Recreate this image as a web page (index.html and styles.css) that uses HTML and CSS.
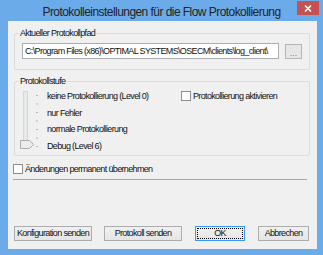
FILE: index.html
```html
<!DOCTYPE html>
<html lang="de">
<head>
    <meta charset="UTF-8">
    <title>Protokolleinstellungen</title>
    <link rel="stylesheet" href="styles.css">
</head>
<body>
<div class="window">
    <div class="titlebar">Protokolleinstellungen für die Flow Protokollierung</div>
    <button class="close" title="Schließen">
        <svg width="8" height="7" viewBox="0 0 8 7"><path d="M1 0.5 L7 6.5 M7 0.5 L1 6.5" stroke="#fff" stroke-width="1.6"/></svg>
    </button>

    <div class="client">
        <!-- Pfad -->
        <fieldset class="group path-group">
            <legend>Aktueller Protokollpfad</legend>
            <div class="path-row">
                <div class="textbox">C:\Program Files (x86)\OPTIMAL SYSTEMS\OSECM\clients\log_client\</div>
                <button class="browse">...</button>
            </div>
        </fieldset>

        <!-- Stufe -->
        <fieldset class="group level-group">
            <legend>Protokollstufe</legend>
            <div class="level-row">
                <svg class="slider" width="21" height="62" viewBox="0 0 21 62">
                    <rect x="4.5" y="3.5" width="4" height="52" fill="#e7eaea" stroke="#d6d6d6"/>
                    <g stroke="#b9b9b9">
                        <line x1="17" y1="7.5" x2="19" y2="7.5"/>
                        <line x1="17" y1="16" x2="19" y2="16"/>
                        <line x1="17" y1="24.5" x2="19" y2="24.5"/>
                        <line x1="17" y1="33" x2="19" y2="33"/>
                        <line x1="17" y1="41.5" x2="19" y2="41.5"/>
                        <line x1="17" y1="50" x2="19" y2="50"/>
                        <line x1="17" y1="58.5" x2="19" y2="58.5"/>
                    </g>
                    <polygon points="1.5,52.5 10.5,52.5 14.5,56.5 10.5,60.5 1.5,60.5" fill="#ececec" stroke="#acacac"/>
                </svg>
                <ul class="levels">
                    <li>keine Protokollierung (Level 0)</li>
                    <li>nur Fehler</li>
                    <li>normale Protokollierung</li>
                    <li>Debug (Level 6)</li>
                </ul>
                <label class="check activate"><span class="box"></span>Protokollierung aktivieren</label>
            </div>
        </fieldset>

        <label class="check permanent"><span class="box"></span>Änderungen permanent übernehmen</label>
        <hr class="separator">

        <div class="actions">
            <button class="btn btn-wide">Konfiguration senden</button>
            <button class="btn btn-wide">Protokoll senden</button>
            <button class="btn btn-ok">OK</button>
            <button class="btn btn-cancel">Abbrechen</button>
        </div>
    </div>
</div>
</body>
</html>
```

FILE: styles.css
```css
body {
    margin: 0;
    padding: 0;
    background: #6cabe9;
}

.window {
    position: relative;
    width: 323px;
    height: 255px;
    box-sizing: border-box;
    padding: 0 6px 6px 8px;
    background: #6cabe9;
    display: flex;
    flex-direction: column;
    font-family: "Liberation Sans", Arial, sans-serif;
    font-size: 9px;
    letter-spacing: -0.65px;
    color: #111;
}

.titlebar {
    height: 21px;
    margin: 0 -6px 0 -8px;
    text-align: center;
    font-size: 12px;
    letter-spacing: -0.55px;
    line-height: 24px;
    color: #1f1f1f;
}

.close {
    position: absolute;
    top: 1px;
    right: 4px;
    width: 22px;
    height: 14px;
    padding: 0;
    border: none;
    background: #c75050;
    display: flex;
    align-items: center;
    justify-content: center;
}

.client {
    flex: 1;
    background: #f0f0f0;
    padding: 6px 7px 8px 6px;
    display: flex;
    flex-direction: column;
}

.group {
    margin: 0;
    min-width: 0;
    border: 1px solid #dcdcdc;
    border-radius: 2px;
}

.group legend {
    padding: 0 1px;
    line-height: 12px;
}

.path-group {
    padding: 4px 7px 10px 4px;
}

.path-row {
    display: flex;
    gap: 6px;
    margin-left: 3px;
}

.textbox {
    width: 257px;
    height: 16px;
    box-sizing: border-box;
    border: 1px solid #abadb3;
    background: #fff;
    padding-left: 2px;
    line-height: 14px;
    white-space: nowrap;
    overflow: hidden;
}

.browse {
    width: 17px;
    height: 15px;
    margin-top: 1px;
    padding: 0;
    border: 1px solid #b5b5b5;
    background: #e6e6e6;
    color: #7d7d7d;
    font-family: inherit;
    font-size: 9px;
    letter-spacing: 0;
    line-height: 16px;
}

.level-group {
    margin-top: 5px;
    padding: 1px 7px 0 4px;
}

.level-row {
    display: flex;
    align-items: flex-start;
}

.slider {
    display: block;
}

.levels {
    list-style: none;
    margin: 0 0 0 7px;
    padding: 0;
    width: 134px;
}

.levels li {
    height: 16.7px;
    line-height: 16.7px;
    white-space: nowrap;
}

.check {
    display: flex;
    align-items: center;
    gap: 2px;
    line-height: 12px;
    white-space: nowrap;
}

.box {
    width: 10px;
    height: 10px;
    box-sizing: border-box;
    border: 1px solid #8f8f8f;
    background: #fff;
}

.activate {
    margin-top: 2px;
}

.permanent {
    margin: 7px 0 0 -1px;
}

.separator {
    width: 294px;
    height: 0;
    margin: 4px 0 0 -1px;
    border: none;
    border-top: 1px solid #a6a6a6;
}

.actions {
    margin-top: auto;
    display: flex;
}

.btn {
    height: 15px;
    padding: 0;
    border: 1px solid #acacac;
    background: linear-gradient(#f0f0f0, #e5e5e5);
    font-family: inherit;
    font-size: 9px;
    letter-spacing: -0.65px;
    line-height: 13px;
    color: #111;
    white-space: nowrap;
}

.btn-wide {
    width: 78px;
    margin-right: 12px;
}

.btn-wide + .btn-wide {
    margin-right: 13px;
}

.btn-ok {
    width: 50px;
    margin-right: 13px;
    border-color: #3399ff;
    outline: 1px dotted #000;
    outline-offset: -3px;
}

.btn-cancel {
    width: 51px;
}
```
